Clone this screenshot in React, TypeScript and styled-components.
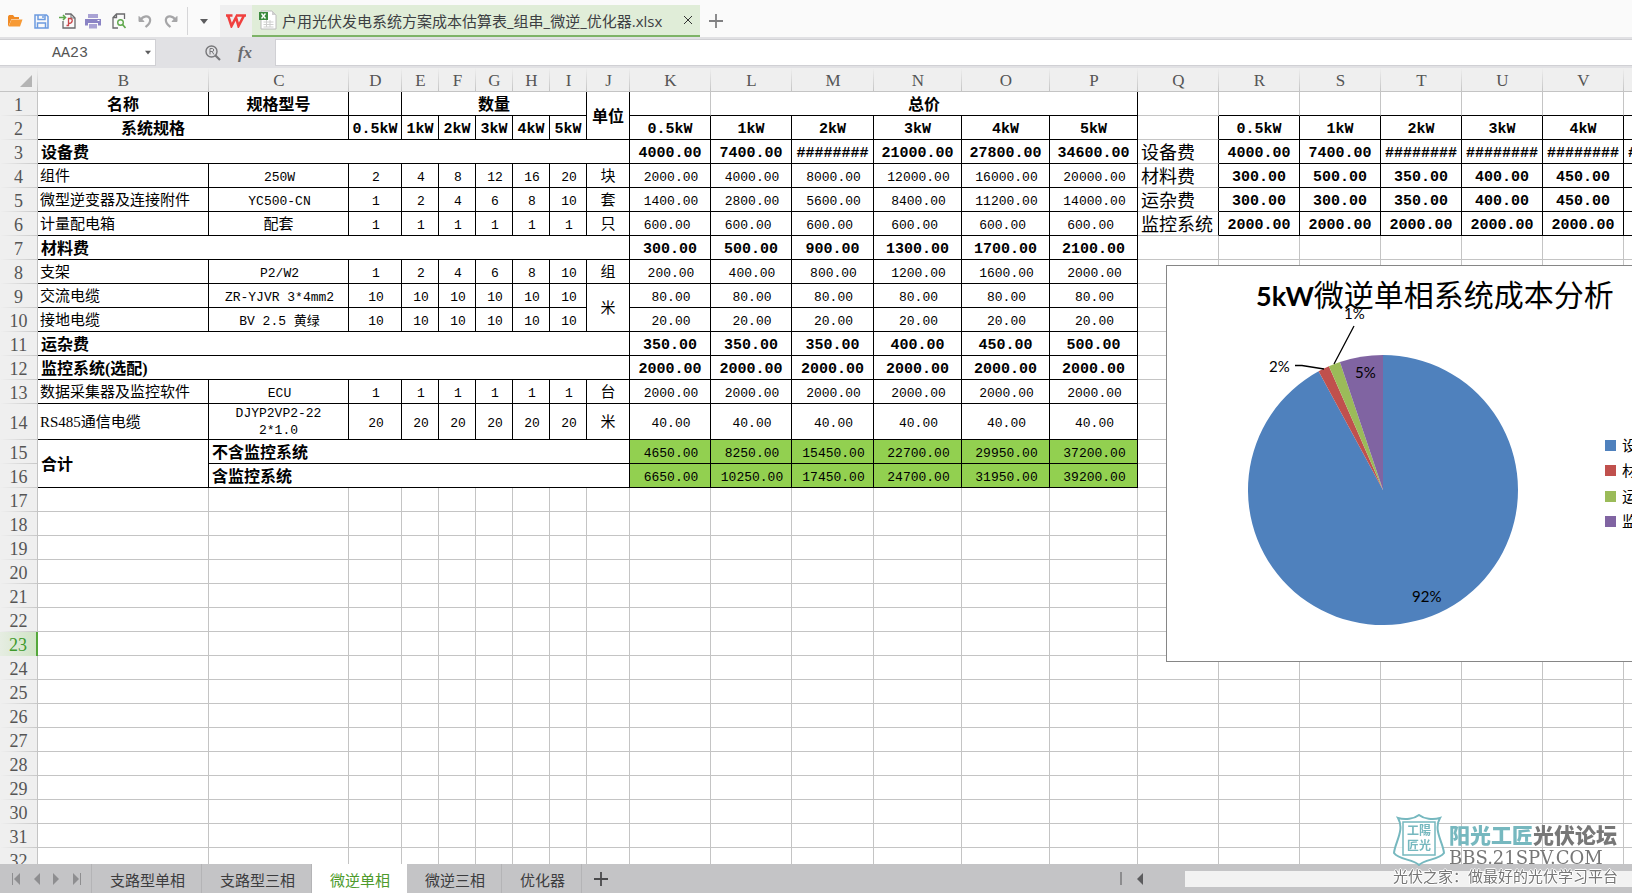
import React from "react";
import styled, { createGlobalStyle, css } from "styled-components";

const GRID = "#c4c4c4";
const CJK = '"Noto Sans CJK SC"';
const MONO = `"Liberation Mono", ${CJK}, monospace`;
const SERIF = `"Liberation Serif", ${CJK}, serif`;
const UI = `"Open Sans", ${CJK}, sans-serif`;

const Global = createGlobalStyle`
  * { box-sizing: border-box; }
  body { margin: 0; background: #fff; overflow: hidden; }
  button, input { font: inherit; color: inherit; border: 0; margin: 0; padding: 0; background: none; border-radius: 0; outline: none; }
`;

const Window = styled.div`
  display: flex;
  flex-direction: column;
  height: 100vh;
  font-family: ${UI};
  color: #000;
`;

/* ---------- title bar ---------- */

const TitleBar = styled.header`
  display: flex;
  align-items: flex-end;
  flex: 0 0 37px;
  background: #fafafa;
`;

const QuickTools = styled.div`
  display: flex;
  align-items: center;
  height: 32px;
  padding-left: 2px;
`;

const ToolButton = styled.button`
  display: flex;
  align-items: center;
  justify-content: center;
  width: 26px;
  height: 32px;
`;

const Divider = styled.span`
  width: 1px;
  height: 28px;
  margin-left: 3px;
  background: #d6d6d8;
`;

const MoreButton = styled(ToolButton)`
  width: 32px;
`;

const LogoButton = styled(ToolButton)`
  width: 32px;
  background: #efeff0;
`;

const FileTab = styled.div`
  display: flex;
  align-items: center;
  width: 448px;
  height: 32px;
  padding: 0 4px 0 7px;
  background: #e0edd8;
  border-bottom: 2px solid #7db366;
  font-size: 15px;
  line-height: 20px;
  color: #3d4043;
  white-space: nowrap;
`;

const FileName = styled.span`
  flex: 1;
  padding: 2px 0 0 5px;
`;

const CloseButton = styled.button`
  display: flex;
  justify-content: center;
  width: 16px;
`;

const NewTab = styled(ToolButton)`
  width: 32px;
`;

/* ---------- formula bar ---------- */

const FormulaBar = styled.div`
  display: flex;
  flex: 0 0 31px;
  padding: 2px 0;
  background: #e1e1e4;
`;

const NameBox = styled.div`
  display: flex;
  align-items: center;
  width: 156px;
  background: #fff;
  border: 1px solid #d0d0d4;
  border-left: 0;
`;

const NameInput = styled.input`
  width: 140px;
  padding-top: 3px;
  font-family: ${MONO};
  font-size: 15px;
  line-height: 20px;
  color: #555;
  text-align: center;
`;

const FormulaTools = styled.div`
  display: flex;
  align-items: center;
  justify-content: flex-end;
  width: 119px;
  padding-right: 14px;
`;

const FormulaTool = styled.button`
  display: flex;
  align-items: center;
  justify-content: center;
  width: 32px;
  height: 24px;
  font-family: "Liberation Serif", serif;
  font-size: 17px;
  font-style: italic;
  font-weight: 700;
  line-height: 24px;
  color: #6a6a6c;
`;

const FormulaInput = styled.input`
  flex: 1;
  min-width: 0;
  padding: 0 6px;
  background: #fff;
  border: 1px solid #d0d0d4;
  border-right: 0;
`;

/* ---------- sheet ---------- */

const SheetArea = styled.main`
  position: relative;
  flex: 1;
  min-height: 0;
  overflow: hidden;
  background: #fff;
`;

const Grid = styled.table`
  table-layout: fixed;
  width: 1px;
  border-collapse: separate;
  border-spacing: 0;
`;

const HeadCell = styled.th`
  height: 24px;
  padding: 3px 0 0;
  background: linear-gradient(#efefef, ${GRID}) right / 1px 100% no-repeat, #efefef;
  border-bottom: 1px solid ${GRID};
  font-family: ${SERIF};
  font-size: 17px;
  font-weight: 400;
  line-height: 20px;
  color: #555;
`;

const RowHead = styled.th<{ $active?: boolean }>`
  padding: 2px 0 0;
  background: linear-gradient(90deg, #efefef, #c8c8c8) bottom / 100% 1px no-repeat, #efefef;
  border-right: 1px solid ${GRID};
  font-family: ${SERIF};
  font-size: 18px;
  font-weight: 400;
  line-height: 20px;
  color: #555;
  ${(p) =>
    p.$active &&
    css`
      background: linear-gradient(90deg, #e6ede2, #d0e4c6);
      border-right: 2px solid #54a83a;
      color: #3e9a2c;
    `}
`;

const TableRow = styled.tr<{ $tall?: boolean }>`
  height: ${(p) => (p.$tall ? 36 : 24)}px;
`;

type Kind = "num" | "numBold" | "text" | "head" | "label" | "side" | "sum" | "wrap";

const kinds = {
  num: css`font-size: 13px; text-align: center; padding: 4px 0 0 2px;`,
  sum: css`font-size: 13px; text-align: center; padding: 3px 0 0 2px; background: #92d050;`,
  wrap: css`font-size: 13px; text-align: center; padding: 0;`,
  numBold: css`font-size: 15px; font-weight: 700; text-align: center; padding: 4px 0 0;`,
  text: css`font-family: ${SERIF}; font-size: 15px; padding: 2px 2px 0;`,
  head: css`font-family: ${SERIF}; font-size: 16px; font-weight: 700; text-align: center; padding: 2px 0 0;`,
  label: css`font-family: ${SERIF}; font-size: 16px; font-weight: 700; padding: 2px 3px 0;`,
  side: css`font-family: ${SERIF}; font-size: 18px; padding: 3px 3px 0;`,
};

const DataCell = styled.td<{ $kind: Kind; $right: string; $bottom: string; $shift?: boolean; $cjk?: boolean }>`
  overflow: hidden;
  border-right: 1px solid ${(p) => p.$right};
  border-bottom: 1px solid ${(p) => p.$bottom};
  font-family: ${MONO};
  line-height: 17px;
  vertical-align: middle;
  white-space: pre;
  ${(p) => kinds[p.$kind]}
  ${(p) => p.$shift && css`padding-right: 80px;`}
  ${(p) => p.$cjk && css`font-family: ${SERIF}; font-size: 15px; padding: 2px 0 0;`}
`;

/* ---------- overlays ---------- */

const ChartPanel = styled.section`
  position: absolute;
  left: 1166px;
  top: 197px;
  width: 620px;
  height: 397px;
  background: #fff;
  border: 1px solid #868686;
`;

const Watermark = styled.aside`
  position: fixed;
  right: 14px;
  bottom: 7px;
  display: grid;
  grid-template-columns: 54px auto;
  column-gap: 2px;
  pointer-events: none;
  white-space: nowrap;
`;

const MarkTitle = styled.div`
  padding-top: 2px;
  font-family: ${CJK}, sans-serif;
  font-size: 21px;
  font-weight: 900;
  line-height: 36px;
  color: #777;
  b { color: #76b8bf; font-weight: 900; }
`;

const MarkUrl = styled.div`
  font-family: "DejaVu Serif", serif;
  font-size: 18px;
  line-height: 12px;
  color: #777;
`;

const MarkLine = styled.div`
  grid-column: 1 / -1;
  font-family: ${CJK}, sans-serif;
  font-size: 15px;
  line-height: 20px;
  color: #777;
  text-shadow: 1px 0 #fff, -1px 0 #fff, 0 1px #fff, 0 -1px #fff;
`;

/* ---------- sheet tabs ---------- */

const BottomBar = styled.footer`
  display: flex;
  flex: 0 0 29px;
  background: #c4c4c6;
`;

const NavGroup = styled.div`
  display: flex;
  align-items: center;
  width: 92px;
  padding-left: 6px;
  border-right: 1px solid #b4b4b6;
`;

const NavButton = styled.button`
  display: flex;
  justify-content: center;
  width: 20px;
`;

const SheetTab = styled.button<{ $active?: boolean }>`
  padding: 3px 16px 0 18px;
  border-right: 1px solid ${(p) => (p.$active ? "#fff" : "#b4b4b6")};
  background: ${(p) => (p.$active ? "#fff" : "transparent")};
  color: ${(p) => (p.$active ? "#4e9a2c" : "#3c3c3e")};
  font-size: 15px;
  line-height: 20px;
  white-space: nowrap;
`;

const AddSheet = styled.button`
  display: flex;
  align-items: center;
  justify-content: center;
  width: 38px;
`;

const ScrollZone = styled.div`
  display: flex;
  align-items: center;
  flex: 0 0 512px;
  margin-left: auto;
`;

const ScrollGrip = styled.span`
  width: 2px;
  height: 13px;
  background: #8c8c8e;
`;

const ScrollLeft = styled.button`
  display: flex;
  justify-content: center;
  width: 34px;
  margin-right: 29px;
`;

const ScrollTrack = styled.div`
  flex: 1;
  height: 16px;
  background: #f2f2f2;
`;

/* ---------- data ---------- */

const columns: [string, number][] = [
  ["B", 171], ["C", 140], ["D", 53], ["E", 37], ["F", 37], ["G", 37], ["H", 37], ["I", 37], ["J", 43],
  ["K", 81], ["L", 81], ["M", 82], ["N", 88], ["O", 88], ["P", 88], ["Q", 81],
  ["R", 81], ["S", 81], ["T", 81], ["U", 81], ["V", 81], ["W", 81],
];

type Cell = {
  t?: string;
  kind?: Kind;
  cols?: number;
  rows?: number;
  right?: string;
  bottom?: string;
  shift?: boolean;
  cjk?: boolean;
};

const INK = "#000";
const HASH = "########";
const cell = (t: string, kind: Kind = "num", extra: Cell = {}): Cell => ({ t, kind, right: INK, bottom: INK, ...extra });
const many = (list: string, kind: Kind = "num") => list.split(" ").map((t) => cell(t.replace("_", "\u00a0"), kind));
const blank = (n: number, extra: Cell = {}): Cell[] => Array.from({ length: n }, () => ({ ...extra }));
const unit = (t: string, rows = 1) => cell(t, "num", { rows, cjk: true });
const side = (t: string): Cell => ({ t, kind: "side", right: INK });

const sizes = "0.5kW 1kW 2kW 3kW 4kW 5kW";
const ones = "1 1 1 1 1 1";
const steps = "1 2 4 6 8 10";

const rows: Cell[][] = [
  [cell("名称", "head"), cell("规格型号", "head"), cell(""), cell("数量", "head", { cols: 5 }), cell("单位", "head", { rows: 2 }),
    cell("", "num", { right: GRID }), cell("总价", "head", { cols: 5 }), ...blank(1), ...blank(6, { bottom: INK })],
  [cell("系统规格", "head", { cols: 2, shift: true }), ...many(sizes, "numBold"), ...many(sizes, "numBold"), side(""), ...many(sizes, "numBold")],
  [cell("设备费", "label", { cols: 9 }), ...many(`4000.00 7400.00 ${HASH} 21000.00 27800.00 34600.00`, "numBold"), side("设备费"),
    ...many(`4000.00 7400.00 ${HASH} ${HASH} ${HASH} ${HASH}`, "numBold")],
  [cell("组件", "text"), cell("250W"), ...many("2 4 8 12 16 20"), unit("块"), ...many("2000.00 4000.00 8000.00 12000.00 16000.00 20000.00"),
    side("材料费"), ...many("300.00 500.00 350.00 400.00 450.00 500.00", "numBold")],
  [cell("微型逆变器及连接附件", "text"), cell("YC500-CN"), ...many(steps), unit("套"), ...many("1400.00 2800.00 5600.00 8400.00 11200.00 14000.00"),
    side("运杂费"), ...many("300.00 300.00 350.00 400.00 450.00 500.00", "numBold")],
  [cell("计量配电箱", "text"), cell("配套", "num", { cjk: true }), ...many(ones), unit("只"), ...many("600.00_ 600.00_ 600.00_ 600.00_ 600.00_ 600.00_"),
    side("监控系统"), ...many("2000.00 2000.00 2000.00 2000.00 2000.00 2000.00", "numBold")],
  [cell("材料费", "label", { cols: 9 }), ...many("300.00 500.00 900.00 1300.00 1700.00 2100.00", "numBold"), ...blank(7)],
  [cell("支架", "text"), cell("P2/W2"), ...many(steps), unit("组"), ...many("200.00 400.00 800.00 1200.00 1600.00 2000.00"), ...blank(7)],
  [cell("交流电缆", "text"), cell("ZR-YJVR 3*4mm2"), ...many("10 10 10 10 10 10"), unit("米", 2), ...many("80.00 80.00 80.00 80.00 80.00 80.00"), ...blank(7)],
  [cell("接地电缆", "text"), cell("BV 2.5 黄绿"), ...many("10 10 10 10 10 10"), ...many("20.00 20.00 20.00 20.00 20.00 20.00"), ...blank(7)],
  [cell("运杂费", "label", { cols: 9 }), ...many("350.00 350.00 350.00 400.00 450.00 500.00", "numBold"), ...blank(7)],
  [cell("监控系统(选配)", "label", { cols: 9 }), ...many("2000.00 2000.00 2000.00 2000.00 2000.00 2000.00", "numBold"), ...blank(7)],
  [cell("数据采集器及监控软件", "text"), cell("ECU"), ...many(ones), unit("台"), ...many("2000.00 2000.00 2000.00 2000.00 2000.00 2000.00"), ...blank(7)],
  [cell("RS485通信电缆", "text"), cell("DJYP2VP2-22\n2*1.0", "wrap"), ...many("20 20 20 20 20 20"), unit("米"), ...many("40.00 40.00 40.00 40.00 40.00 40.00"), ...blank(7)],
  [cell("合计", "label", { rows: 2 }), cell("不含监控系统", "label", { cols: 8 }), ...many("4650.00 8250.00 15450.00 22700.00 29950.00 37200.00", "sum"), ...blank(7)],
  [cell("含监控系统", "label", { cols: 8 }), ...many("6650.00 10250.00 17450.00 24700.00 31950.00 39200.00", "sum"), ...blank(7)],
  ...Array.from({ length: 24 }, () => blank(22)),
];

/* ---------- chart ---------- */

const CX = 216;
const CY = 224;
const R = 135;
const at = (deg: number) => {
  const a = ((deg - 90) * Math.PI) / 180;
  return `${(CX + R * Math.cos(a)).toFixed(2)} ${(CY + R * Math.sin(a)).toFixed(2)}`;
};
const wedge = (from: number, to: number) =>
  `M${CX} ${CY} L${at(from)} A${R} ${R} 0 ${to - from > 180 ? 1 : 0} 1 ${at(to)} Z`;

const slices = [
  { name: "设备费", color: "#4f81bd", from: 0, to: 331.5 },
  { name: "材料费", color: "#c0504d", from: 331.5, to: 336.4 },
  { name: "运杂费", color: "#9bbb59", from: 336.4, to: 341.4 },
  { name: "监控系统", color: "#8064a2", from: 341.4, to: 360 },
];

const ChartSvg = styled.svg`
  display: block;
  font-family: Lato, ${CJK}, sans-serif;
  font-size: 15px;
`;

const Chart = () => (
  <ChartPanel>
    <ChartSvg width="618" height="395" role="img" aria-label="5kW微逆单相系统成本分析">
      <text x="89" y="40" fontSize="27" fontWeight="700">
        5kW<tspan fontSize="30" fontWeight="400">微逆单相系统成本分析</tspan>
      </text>
      {slices.map((s) => (
        <path key={s.name} d={wedge(s.from, s.to)} fill={s.color} />
      ))}
      <path d="M128 99.500 H135 L157 103 M187 60 L167 98" fill="none" stroke="#000" strokeWidth="1.300" />
      <text x="102" y="106">2%</text>
      <text x="177" y="53">1%</text>
      <text x="188" y="112">5%</text>
      <text x="245" y="336">92%</text>
      {slices.map((s, i) => (
        <g key={s.name}>
          <rect x="438" y={174 + i * 26 - Math.ceil(i / 2)} width="11" height="11" fill={s.color} />
          <text x="455" y={185 + i * 26 - Math.ceil(i / 2)}>{s.name}</text>
        </g>
      ))}
    </ChartSvg>
  </ChartPanel>
);

/* ---------- icons ---------- */

const Folder = () => (
  <svg width="16" height="14" viewBox="0 0 16 14">
    <path d="M1 12V2.5L2 1h4l1.500 2H12v2H4.500L1.500 12z" fill="#f08a24" />
    <path d="M4.500 5.500H15.500L13 12.500H1.500z" fill="#f79a35" />
  </svg>
);
const Save = () => (
  <svg width="15" height="15" viewBox="0 0 15 15" fill="none" stroke="#6c9be0" strokeWidth="1.500">
    <path d="M1 1h11.500L14 2.500V14H1z" />
    <path d="M4 1v4.500h7V1M3.500 14V9h8v5" />
    <path d="M9 2v2" />
  </svg>
);
const Pdf = () => (
  <svg width="17" height="16" viewBox="0 0 17 16" fill="none">
    <path d="M6 1h6l4 4v10H4V8" stroke="#6a6a6c" strokeWidth="1.300" />
    <path d="M12 1v4h4" stroke="#6a6a6c" />
    <path d="M0 4.500h6M4 2l2.500 2.500L4 7" stroke="#5fa84c" strokeWidth="1.500" />
    <path d="M7.500 12.500h2V5.500h2c3 .5 2 5-2 5" stroke="#c9474a" strokeWidth="1.300" />
  </svg>
);
const Print = () => (
  <svg width="16" height="15" viewBox="0 0 16 15">
    <path d="M3 0h10v4H3z" fill="#a9a2d4" />
    <path d="M0 5h16v6.500h-3V9H3v2.500H0z" fill="#8a83c4" />
    <path d="M4 10h8v4.500H4z" fill="#a9a2d4" />
    <path d="M12.500 6.500h2" stroke="#fff" />
  </svg>
);
const Preview = () => (
  <svg width="14" height="16" viewBox="0 0 14 16" fill="none">
    <path d="M12.500 6V1H4.500L1 4.500V15h5M1 4.500h3.500V1" stroke="#6a6a6c" strokeWidth="1.300" />
    <circle cx="8.500" cy="9.500" r="2.800" stroke="#5fa84c" strokeWidth="1.400" />
    <path d="M10.500 11.500L13.500 15" stroke="#5fa84c" strokeWidth="1.600" />
  </svg>
);
const Undo = ({ flip }: { flip?: boolean }) => (
  <svg width="14" height="14" viewBox="0 0 14 14" fill="none" stroke="#a6a6a8" strokeWidth="2.200">
    <g transform={flip ? "translate(14 0) scale(-1 1)" : undefined}>
      <path d="M2.500 6C5 1.500 11 1 12 5s-2 6-4.500 8" />
      <path d="M1 2.500V7.500H6z" fill="#a6a6a8" strokeWidth="1" />
    </g>
  </svg>
);
const Wps = () => (
  <svg width="20" height="14" viewBox="0 0 20 14" fill="none" stroke="#f0403f" strokeWidth="2.600">
    <path d="M0 1.500h6.500M2 1.500L5.500 12L10 3.500L12.500 12L18 1.500M10 1.500h10" />
  </svg>
);
const Xls = () => (
  <svg width="18" height="20" viewBox="0 0 18 20">
    <path d="M2 1h11l4 4v14H2z" fill="#fff" stroke="#bcbcbc" />
    <path d="M13 1v4h4z" fill="#d0d0d0" />
    <path d="M4.500 12h10M4.500 14.500h10M4.500 17h10M7.500 10v7M11 10v7" stroke="#cfcfcf" />
    <path d="M0 2h9v8H0z" fill="#3c8a3f" />
    <path d="M2.500 3.500l4 5M6.500 3.500l-4 5" stroke="#fff" strokeWidth="1.400" />
  </svg>
);
const Plus = ({ size, color }: { size: number; color: string }) => (
  <svg width={size} height={size} viewBox="0 0 14 14" stroke={color} strokeWidth="1.800">
    <path d="M7 0v14M0 7h14" />
  </svg>
);
const Caret = ({ w = 8 }: { w?: number }) => (
  <svg width={w} height="5" viewBox="0 0 8 5"><path d="M0 0h8L4 5z" fill="#5c5c5e" /></svg>
);
const Magnifier = () => (
  <svg width="16" height="16" viewBox="0 0 16 16" fill="none" stroke="#77777a">
    <circle cx="6.500" cy="6.500" r="5.500" strokeWidth="1.400" />
    <path d="M10.500 10.500L15 15" strokeWidth="2.200" />
    <path d="M5 9.500v-6h2.500c1.500 0 1.500 3 0 3H5M7 6.500l2 3" />
  </svg>
);
const Nav = ({ bar, flip, color = "#8e8e90" }: { bar?: boolean; flip?: boolean; color?: string }) => (
  <svg width="9" height="12" viewBox="0 0 9 12">
    <g transform={flip ? "translate(9 0) scale(-1 1)" : undefined} fill={color}>
      <path d="M8 0v12L2 6z" />
      {bar && <path d="M0 0h1v12H0z" />}
    </g>
  </svg>
);
const Shield = () => (
  <svg width="52" height="52" viewBox="0 0 52 52" fill="none" stroke="#76b8bf">
    <path d="M26 1C21 5 12 6 5 4C12 16 2 28 1 39C6 46 20 45 26 51C32 45 46 46 51 39C50 28 40 16 47 4C40 6 31 5 26 1Z" fill="#fff" fillOpacity="0.700" strokeWidth="2" />
    <path d="M10 8h32v33H10z" fill="#fff" strokeWidth="1.500" />
    <g fill="#76b8bf" stroke="none" fontFamily={`${CJK}, sans-serif`} fontSize="12" fontWeight="700">
      <text x="14" y="21">工陽</text>
      <text x="14" y="36">匠光</text>
    </g>
  </svg>
);

const tabs = ["支路型单相", "支路型三相", "微逆单相", "微逆三相", "优化器"];

export default function App() {
  return (
    <Window>
      <Global />
      <TitleBar>
        <QuickTools>
          <ToolButton aria-label="打开"><Folder /></ToolButton>
          <ToolButton aria-label="保存"><Save /></ToolButton>
          <ToolButton aria-label="输出为PDF"><Pdf /></ToolButton>
          <ToolButton aria-label="打印"><Print /></ToolButton>
          <ToolButton aria-label="打印预览"><Preview /></ToolButton>
          <ToolButton aria-label="撤销"><Undo /></ToolButton>
          <ToolButton aria-label="恢复"><Undo flip /></ToolButton>
          <Divider />
          <MoreButton aria-label="更多"><Caret w={10} /></MoreButton>
        </QuickTools>
        <LogoButton aria-label="WPS"><Wps /></LogoButton>
        <FileTab>
          <Xls />
          <FileName>户用光伏发电系统方案成本估算表_组串_微逆_优化器.xlsx</FileName>
          <CloseButton aria-label="关闭">
            <svg width="8" height="8" viewBox="0 0 8 8" stroke="#333"><path d="M0 0l8 8M8 0L0 8" /></svg>
          </CloseButton>
        </FileTab>
        <NewTab aria-label="新建"><Plus size={14} color="#808082" /></NewTab>
      </TitleBar>

      <FormulaBar>
        <NameBox>
          <NameInput aria-label="名称框" defaultValue="AA23" />
          <CloseButton aria-label="展开名称"><Caret w={6} /></CloseButton>
        </NameBox>
        <FormulaTools>
          <FormulaTool aria-label="查找"><Magnifier /></FormulaTool>
          <FormulaTool>fx</FormulaTool>
        </FormulaTools>
        <FormulaInput aria-label="编辑栏" />
      </FormulaBar>

      <SheetArea>
        <Grid>
          <colgroup>
            <col width="38" />
            {columns.map(([name, w]) => <col key={name} width={w} />)}
          </colgroup>
          <thead>
            <tr>
              <HeadCell aria-label="全选">
                <svg width="36" height="12" viewBox="0 0 36 12" display="block"><path d="M32 0v12H20z" fill="#b4b4b4" /></svg>
              </HeadCell>
              {columns.map(([name]) => <HeadCell key={name} scope="col">{name}</HeadCell>)}
            </tr>
          </thead>
          <tbody>
            {rows.map((row, r) => (
              <TableRow key={r} $tall={r === 13}>
                <RowHead scope="row" $active={r === 22}>{r + 1}</RowHead>
                {row.map((c, i) => (
                  <DataCell
                    key={i}
                    colSpan={c.cols}
                    rowSpan={c.rows}
                    $kind={c.kind ?? "num"}
                    $right={c.right ?? GRID}
                    $bottom={c.bottom ?? GRID}
                    $shift={c.shift}
                    $cjk={c.cjk}
                  >
                    {c.t}
                  </DataCell>
                ))}
              </TableRow>
            ))}
          </tbody>
        </Grid>
        <Chart />
      </SheetArea>

      <BottomBar>
        <NavGroup>
          <NavButton aria-label="第一个"><Nav bar /></NavButton>
          <NavButton aria-label="上一个"><Nav /></NavButton>
          <NavButton aria-label="下一个"><Nav flip /></NavButton>
          <NavButton aria-label="最后一个"><Nav bar flip /></NavButton>
        </NavGroup>
        {tabs.map((t) => <SheetTab key={t} $active={t === "微逆单相"}>{t}</SheetTab>)}
        <AddSheet aria-label="新建工作表"><Plus size={14} color="#4a4a4c" /></AddSheet>
        <ScrollZone>
          <ScrollGrip />
          <ScrollLeft aria-label="向左滚动"><Nav color="#5c5c5e" /></ScrollLeft>
          <ScrollTrack />
        </ScrollZone>
      </BottomBar>

      <Watermark>
        <Shield />
        <div>
          <MarkTitle><b>阳光工匠</b>光伏论坛</MarkTitle>
          <MarkUrl>BBS.21SPV.COM</MarkUrl>
        </div>
        <MarkLine>光伏之家：做最好的光伏学习平台</MarkLine>
      </Watermark>
    </Window>
  );
}
